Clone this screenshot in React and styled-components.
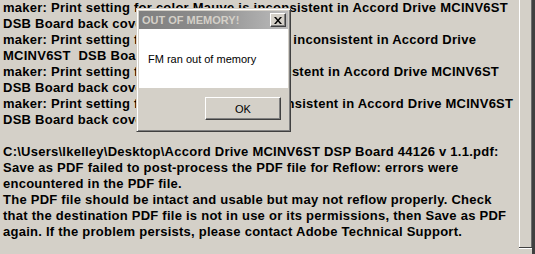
import React from "react";
import styled, { createGlobalStyle } from "styled-components";

const GlobalStyle = createGlobalStyle`
  html, body { margin: 0; padding: 0; background: #d4d0c8; }
  body { width: 535px; height: 254px; overflow: hidden; }
`;

const logLines = [
  "maker: Print setting for color Mauve is inconsistent in Accord Drive MCINV6ST",
  "DSB Board back cover.",
  "maker: Print setting for color Process Red is inconsistent in Accord Drive",
  "MCINV6ST  DSB Board back cover.",
  "maker: Print setting for color Cyan is inconsistent in Accord Drive MCINV6ST",
  "DSB Board back cover.",
  "maker: Print setting for color Orange is inconsistent in Accord Drive MCINV6ST",
  "DSB Board back cover.",
  "",
  "C:\\Users\\lkelley\\Desktop\\Accord Drive MCINV6ST DSP Board 44126 v 1.1.pdf:",
  "Save as PDF failed to post-process the PDF file for Reflow: errors were",
  "encountered in the PDF file.",
  "The PDF file should be intact and usable but may not reflow properly. Check",
  "that the destination PDF file is not in use or its permissions, then Save as PDF",
  "again. If the problem persists, please contact Adobe Technical Support.",
];

export default function App() {
  return (
    <>
      <GlobalStyle />
      <Screen>
        <LogPane>
          {logLines.map((line, i) => (
            <LogLine key={i}>{line || "\u00a0"}</LogLine>
          ))}
        </LogPane>
        <ScrollStrip>
          <Track />
          <Corner />
        </ScrollStrip>

        <Dialog>
          <TitleBar>
            <Title>OUT OF MEMORY!</Title>
            <CloseButton>
              <svg width="8" height="7" viewBox="0 0 8 7">
                <path d="M0 0h2l2 2.5L6 0h2L5 3.5 8 7H6L4 4.5 2 7H0l3-3.5z" fill="#000" />
              </svg>
            </CloseButton>
          </TitleBar>
          <Message>FM ran out of memory</Message>
          <Footer>
            <OkButton>OK</OkButton>
          </Footer>
        </Dialog>
      </Screen>
    </>
  );
}

const Screen = styled.div`
  position: relative;
  display: flex;
  width: 535px;
  height: 254px;
  background: #d4d0c8;
`;

const LogPane = styled.div`
  flex: 1;
  padding-left: 3px;
  font-family: "Liberation Sans", Arial, sans-serif;
  font-weight: bold;
  font-size: 13px;
  letter-spacing: 0.25px;
  line-height: 16px;
  color: #000;
  overflow: hidden;
`;

const LogLine = styled.div`
  white-space: pre;
`;

const ScrollStrip = styled.div`
  width: 16px;
  display: flex;
  flex-direction: column;
`;

const Track = styled.div`
  flex: 1;
  border-left: 1px solid #fff;
  border-right: 3px solid #404040;
  box-shadow: inset -1px 0 #6c6c6c;
`;

const Corner = styled.div`
  height: 6px;
  border-top: 1px solid #404040;
  box-shadow: inset 0 1px #fff;
  border-right: 3px solid #404040;
`;

const Dialog = styled.div`
  position: absolute;
  left: 136px;
  top: 8px;
  width: 155px;
  height: 124px;
  box-sizing: border-box;
  display: flex;
  flex-direction: column;
  padding: 2px;
  background: #d4d0c8;
  border: 1px solid;
  border-color: #d4d0c8 #404040 #404040 #d4d0c8;
  box-shadow: inset 1px 1px #fff, inset -1px -1px #808080;
  font-family: "Liberation Sans", Tahoma, sans-serif;
`;

const TitleBar = styled.div`
  height: 18px;
  display: flex;
  align-items: center;
  justify-content: space-between;
  padding: 0 2px 0 3px;
  background: linear-gradient(to right, #808080 0%, #8c8c8c 45%, #bcbcbc 100%);
`;

const Title = styled.span`
  font-size: 11px;
  font-weight: bold;
  color: #d4d0c8;
`;

const CloseButton = styled.div`
  width: 16px;
  height: 14px;
  box-sizing: border-box;
  display: flex;
  align-items: center;
  justify-content: center;
  background: #d4d0c8;
  border: 1px solid;
  border-color: #fff #404040 #404040 #fff;
  box-shadow: inset -1px -1px #808080;
`;

const Message = styled.div`
  height: 59px;
  display: flex;
  align-items: center;
  padding-left: 9px;
  background: #fff;
  font-size: 11px;
  color: #000;
`;

const Footer = styled.div`
  flex: 1;
  display: flex;
  justify-content: flex-end;
  align-items: flex-start;
  padding: 9px 7px 0 0;
`;

const OkButton = styled.div`
  width: 76px;
  height: 23px;
  box-sizing: border-box;
  display: flex;
  align-items: center;
  justify-content: center;
  background: #d4d0c8;
  border: 1px solid;
  border-color: #fff #404040 #404040 #fff;
  box-shadow: inset -1px -1px #808080;
  font-size: 11px;
  color: #000;
`;
